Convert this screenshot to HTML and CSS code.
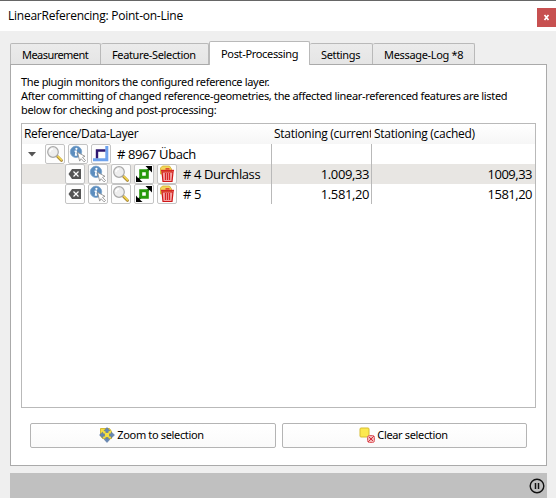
FILE: index.html
```html
<!DOCTYPE html>
<html lang="en">
<head>
<meta charset="utf-8">
<title>LinearReferencing: Point-on-Line</title>
<link rel="stylesheet" href="styles.css">
</head>
<body>
<svg class="defs" width="0" height="0">
  <symbol id="lens" viewBox="0 0 18 18">
    <path d="M11.500 11.500l4 4" stroke="#a98634" stroke-width="2.800" stroke-linecap="round"/>
    <path d="M11.800 11.300l3.600 3.600" stroke="#f2d64f" stroke-width="1.500" stroke-linecap="round"/>
    <circle cx="7" cy="7" r="5.300" fill="#eeeeee" stroke="#a8a8a8" stroke-width="1.200"/>
    <path d="M4 7a3 3 0 0 1 3-3" fill="none" stroke="#fff" stroke-width="1.300"/>
  </symbol>
  <symbol id="info" viewBox="0 0 18 18">
    <circle cx="7" cy="6.800" r="5.700" fill="#5c8dbe" stroke="#7ba4cd" stroke-width=".8"/>
    <circle cx="7.400" cy="3.800" r="1.100" fill="#fff"/>
    <path d="M5.600 6.200h1.600L6.600 10h1.500" fill="none" stroke="#fff" stroke-width="1.500"/>
    <path d="M8.500 7.300l7.500 4-2.500 1 3 3.200-1.400 1.400-3-3.200-1.400 2.400z" fill="#fff" stroke="#888" stroke-width=".8"/>
  </symbol>
  <symbol id="line" viewBox="0 0 18 18">
    <path d="M14.800 1v13.800H1" fill="none" stroke="#6da2ee" stroke-width="3"/>
    <path d="M5 13.300V5.500h8.300" fill="none" stroke="#2d1770" stroke-width="2.400"/>
  </symbol>
  <symbol id="erase" viewBox="0 0 18 18">
    <path d="M2.500 9l3.500-5h9v10H6z" fill="#555"/>
    <path d="M7.500 6.500l5 5m0-5l-5 5" stroke="#fff" stroke-width="1.200"/>
  </symbol>
  <symbol id="extent" viewBox="0 0 18 18">
    <path d="M3 15l12-12" stroke="#000" stroke-width="2"/>
    <path d="M10.500 1H17v6.500l-2-2-2-2zM1 10.500V17h6.500l-4.500-4z" fill="#000"/>
    <path d="M5.700 5.700h6.600v6.600h-6.600z" fill="#fff" stroke="#269a0c" stroke-width="3"/>
  </symbol>
  <symbol id="trash" viewBox="0 0 18 18">
    <path d="M2.500 3l2-2h7l2 3v5h-11z" fill="#f2d65a" stroke="#d3af2b" stroke-width=".8"/>
    <path d="M4 7h11l-1 9.500H5z" fill="#f3a3a3" stroke="#cf1717" stroke-width="1.200"/>
    <path d="M3 5.700h13" stroke="#d62525" stroke-width="1.800"/>
    <path d="M7.500 3.800h4M7.500 8v7m2-7v7m2-7v7" fill="none" stroke="#d62525" stroke-width="1.200"/>
  </symbol>
</svg>
<div class="window">
  <header class="titlebar"><span class="title">LinearReferencing: Point-on-Line</span>
    <button class="close"><svg width="19" height="19"><path d="M7.500 7l4 5m0-5l-4 5" stroke="#fff" stroke-width="1.700"/></svg></button></header>
  <nav class="tabs">
    <div class="tab measurement"><span>Measurement</span></div>
    <div class="tab feature"><span>Feature-Selection</span></div>
    <div class="tab post active"><span>Post-Processing</span></div>
    <div class="tab settings"><span>Settings</span></div>
    <div class="tab log"><span>Message-Log *8</span></div>
  </nav>
  <main class="panel">
    <p class="intro"><span>The plugin monitors the configured reference layer.</span><br><span>After committing of changed reference-geometries, the affected linear-referenced features are listed</span><br><span>below for checking and post-processing:</span></p>
    <section class="tree">
      <div class="row head"><div class="cell first">Reference/Data-Layer</div><div class="cell">Stationing (current)</div><div class="cell">Stationing (cached)</div></div>
      <div class="row parent">
        <div class="cell"><svg class="arrow" width="8" height="5"><path d="M0 0h8L4 4.500z" fill="#555"/></svg>
          <div class="tools"><button><svg><use href="#lens"/></svg></button><button><svg><use href="#info"/></svg></button><button><svg><use href="#line"/></svg></button></div><span class="name"># 8967 Übach</span></div>
        <div class="cell"></div><div class="cell"></div>
      </div>
      <div class="row child shaded">
        <div class="cell"><div class="tools"><button><svg><use href="#erase"/></svg></button><button><svg><use href="#info"/></svg></button><button><svg><use href="#lens"/></svg></button><button><svg><use href="#extent"/></svg></button><button><svg><use href="#trash"/></svg></button></div><span class="name"># 4 Durchlass</span></div>
        <div class="cell num">1.009,33</div><div class="cell num">1009,33</div>
      </div>
      <div class="row child">
        <div class="cell"><div class="tools"><button><svg><use href="#erase"/></svg></button><button><svg><use href="#info"/></svg></button><button><svg><use href="#lens"/></svg></button><button><svg><use href="#extent"/></svg></button><button><svg><use href="#trash"/></svg></button></div><span class="name"># 5</span></div>
        <div class="cell num">1.581,20</div><div class="cell num">1581,20</div>
      </div>
    </section>
    <div class="actions">
      <button class="action"><svg width="16" height="16" viewBox="0 0 16 16"><path d="M1.500 1.500h9l2 3v7h-9l-2-3z" fill="#f5df42" stroke="#d2b735"/><path d="M8 .5l3 3.200H9.200v1.800H6.800V3.700H5zM8 15.500l3-3.200H9.200v-1.800H6.800v1.800H5zM.5 8l3.200-3v1.800h1.800v2.400H3.700V11zM15.500 8l-3.200-3v1.800h-1.800v2.400h1.800V11z" fill="#6688b4" stroke="#526f98" stroke-width=".5"/></svg><span>Zoom to selection</span></button>
      <button class="action"><svg width="16" height="16" viewBox="0 0 16 16"><rect x="1" y="1" width="9" height="9" rx="1" fill="#fce94f" stroke="#d7bd32"/><rect x="8.500" y="8.500" width="7" height="7" rx="2" fill="#f3b6b6" stroke="#df6066"/><path d="M9 15l6-6M10 10l4 4" stroke="#d73340"/></svg><span>Clear selection</span></button>
    </div>
  </main>
  <footer class="statusbar"><svg width="16" height="16" viewBox="0 0 16 16"><circle cx="8" cy="8" r="6.800" fill="none" stroke="#111" stroke-width="1.400"/><path d="M6.500 5v6m3-6v6" stroke="#111" stroke-width="1.500"/></svg></footer>
</div>
</body>
</html>
```
FILE: styles.css
```css
* { box-sizing: border-box; }
body { margin: 0; background: #efefef; color: #000; font: 11px/14px "Noto Sans", sans-serif; letter-spacing: -.33px; overflow: hidden; }
button { font: inherit; letter-spacing: inherit; color: inherit; padding: 0; margin: 0; }
svg { display: block; flex: none; }
.defs { position: absolute; }
span { white-space: nowrap; }
.window { height: 498px; display: flex; flex-direction: column; }
.titlebar { height: 31px; border-top: 1px solid #666; background: #fff; display: flex; justify-content: space-between; padding: 7px 0 0 8px; flex: none; }
.title { font: 12px/16px "Open Sans", sans-serif; letter-spacing: -.24px; }
.close { width: 19px; height: 19px; border: 0; background: #c75050; }
.tabs { height: 33px; display: flex; align-items: flex-end; padding-left: 10px; flex: none; }
.tab { height: 21px; border: 1px solid #b9b9b9; border-left-width: 0; border-bottom: 0; border-radius: 2px 2px 0 0; background: linear-gradient(#ebebeb, #e5e5e5); padding: 4px 0 0 12px; }
.measurement { width: 91px; border-left-width: 1px; padding-left: 11px; letter-spacing: -.55px; }
.feature { width: 108px; padding-left: 11px; letter-spacing: -.36px; }
.post { width: 101px; }
.settings { width: 63px; padding-left: 11px; }
.log { width: 102px; padding-left: 11px; }
.tab.active { height: 24px; margin-bottom: -1px; border-left-width: 1px; padding-left: 11px; padding-top: 5px; background: #fff; z-index: 1; }
.panel { width: 537px; height: 402px; margin-left: 10px; border: 1px solid #aaa; background: #fff; padding: 10px 10px 0; flex: none; }
.intro { margin: 0 0 6px; height: 42px; }
.tree { width: 515px; height: 285px; border: 1px solid #b9b9b9; font: 13px/20px "Open Sans", sans-serif; letter-spacing: -.4px; }
.row { display: grid; grid-template-columns: 250px 100px 1fr; height: 20px; }
.cell { display: flex; align-items: center; overflow: hidden; border-right: 1px solid #b9b9b9; white-space: nowrap; }
.cell:last-child { border-right: 0; }
.head { font-size: 12px; letter-spacing: -.28px; background: linear-gradient(#fff, #f6f6f6); }
.head .cell { border-color: transparent; padding-left: 2px; }
.head .first { letter-spacing: -.37px; }
.shaded { background: #e8e6e3; }
.arrow { margin: 0 9px 0 6px; }
.tools { display: flex; gap: 3px; }
.child .tools { margin-left: 43px; }
.tools button { width: 20px; height: 20px; border: 1px solid #c4c4c4; border-radius: 2px; background: #fdfdfd; }
.tools svg { width: 18px; height: 18px; }
.name { margin-left: 6px; }
.num { justify-content: flex-end; padding-right: 2px; }
.num:last-child { padding-right: 3px; letter-spacing: -.5px; }
.actions { display: flex; gap: 6px; padding: 15px 0 0 9px; }
.action { width: 246px; height: 25px; border: 1px solid #b4b4b4; border-radius: 2px; background: linear-gradient(#fff, #fafafa); display: flex; align-items: center; justify-content: center; gap: 2px; padding-right: 3px; letter-spacing: -.35px; padding-bottom: 1px; }
.action + .action { width: 245px; padding-right: 2px; }
.statusbar { width: 537px; height: 25px; margin: 7px 0 0 10px; background: #c0c0c0; display: flex; align-items: center; justify-content: flex-end; padding-right: 2px; }
```
